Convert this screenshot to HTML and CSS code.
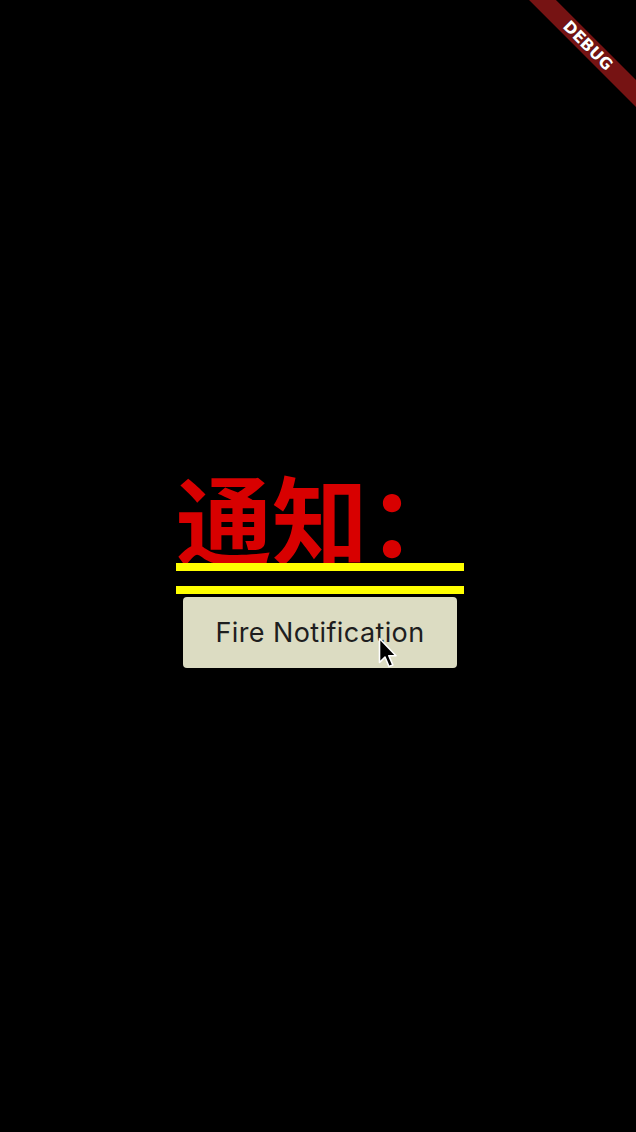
FILE: index.html
```html
<!DOCTYPE html>
<html>
  <head>
    <meta charset="utf-8" />
    <meta name="viewport" content="width=device-width, initial-scale=1.0" />
    <title>Notification Demo</title>
    <link rel="stylesheet" href="styles.css">
  </head>
  <body>
    <div id="screen">
      <div id="notice">
        <h1 id="title">通知：</h1>
        <div class="rule"></div>
        <div class="rule second"></div>
        <button id="fireNotification">Fire Notification</button>
      </div>

      <!-- mouse pointer caught in the capture -->
      <svg id="pointer" width="20" height="34" viewBox="0 0 20 34">
        <path d="M1.5 1.5 L1.5 25.5 L7 20 L11 29.5 L14.8 27.9 L10.8 18.8 L18 18.8 Z"
              fill="#000" stroke="#fff" stroke-width="1.6" stroke-linejoin="round" />
      </svg>

      <div id="debugCorner">
        <div id="debugBanner">DEBUG</div>
      </div>
    </div>
  </body>
</html>
```

FILE: styles.css
```css
html {
  box-sizing: border-box;
}
*,
*:before,
*:after {
  box-sizing: inherit;
}
body {
  margin: 0;
  background: #000;
  overflow: hidden;
  font-family: "Liberation Sans", "Noto Sans CJK SC", sans-serif;
}
#screen {
  position: relative;
  height: 1132px;
  display: flex;
  justify-content: center;
  align-items: center;
  padding: 4px 0 0 4px;
}
#notice {
  display: flex;
  flex-direction: column;
  align-items: center;
}
#title {
  margin: 0;
  width: 288px;
  height: 95px;
  font-family: "Noto Sans CJK SC", sans-serif;
  font-size: 96px;
  line-height: 96px;
  font-weight: 700;
  color: #d80000;
  white-space: nowrap;
}
.rule {
  width: 288px;
  height: 8px;
  background: #ffff00;
}
.rule.second {
  margin-top: 15px;
}
#fireNotification {
  margin-top: 3px;
  width: 274px;
  height: 71px;
  border: none;
  border-radius: 4px;
  background: #dcdcc2;
  color: #1e1e1e;
  font-family: "Inter", sans-serif;
  font-size: 27px;
  letter-spacing: 0.4px;
  padding: 0;
}
#pointer {
  position: absolute;
  left: 378px;
  top: 637px;
}
#debugCorner {
  position: absolute;
  top: 0;
  right: 0;
  width: 120px;
  height: 120px;
  overflow: hidden;
}
#debugBanner {
  position: absolute;
  left: -28px;
  top: 36px;
  width: 200px;
  height: 19px;
  transform: rotate(45deg);
  background: #761313;
  color: #fff;
  font-family: "DejaVu Sans", sans-serif;
  font-weight: 700;
  font-size: 16px;
  line-height: 19px;
  text-align: center;
  text-shadow: 0 0 1px rgba(0, 0, 0, 0.6);
}
```
